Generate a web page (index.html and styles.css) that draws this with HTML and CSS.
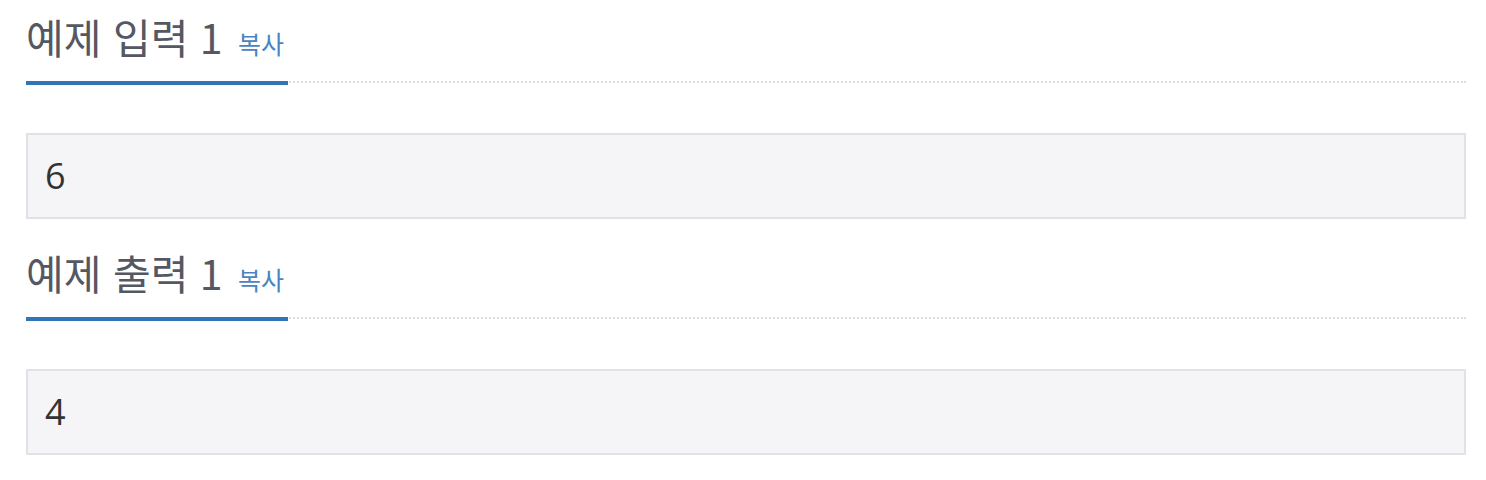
FILE: index.html
```html
<!DOCTYPE html>
<html lang="ko">
<head>
<meta charset="utf-8">
<link rel="stylesheet" href="styles.css">
</head>
<body>
<div class="page">
  <section class="sample">
    <div class="headline">
      <h2 class="title">예제 입력 1 <a class="copy">복사</a></h2>
    </div>
    <pre class="data">6</pre>
  </section>
  <section class="sample">
    <div class="headline">
      <h2 class="title">예제 출력 1 <a class="copy">복사</a></h2>
    </div>
    <pre class="data">4</pre>
  </section>
</div>
</body>
</html>
```
FILE: styles.css
```css
html, body {
  margin: 0;
  padding: 0;
  background: #ffffff;
}
.page {
  padding: 14px 20px 0 26px;
  font-family: "Noto Sans CJK KR", "Noto Sans", sans-serif;
}
.sample + .sample {
  margin-top: 31px;
}
.headline {
  display: flex;
  border-bottom: 2px dotted #dddddd;
}
.title {
  margin: 0 0 -4px;
  padding: 0 4px 23px 0;
  border-bottom: 4px solid #3374b8;
  font-size: 41px;
  line-height: 44px;
  font-weight: 400;
  color: #535862;
  white-space: nowrap;
}
.copy {
  font-size: 25px;
  line-height: 24px;
  font-weight: 400;
  color: #4a84c3;
  text-decoration: none;
  margin-left: 4px;
}
.data {
  margin: 50px 0 0;
  padding: 19px 17px;
  border: 2px solid #e1e1e8;
  background: #f5f5f7;
  font-family: "Open Sans", "Noto Sans", sans-serif;
  font-size: 36px;
  line-height: 44px;
  color: #333333;
}
```
